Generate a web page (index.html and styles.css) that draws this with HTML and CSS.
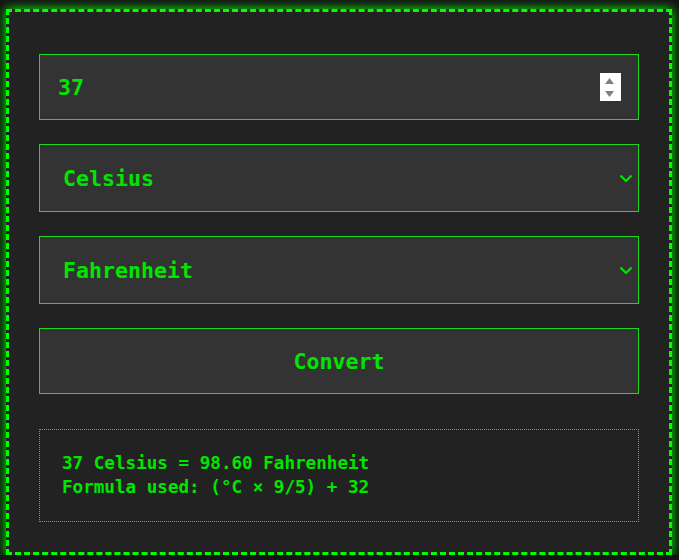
FILE: index.html
```html
<!DOCTYPE html>
<html lang="en">
<head>
<meta charset="utf-8">
<title>Temperature Converter</title>
<link rel="stylesheet" href="styles.css">
</head>
<body>
<div class="converter">
  <div class="wrap wrap-num">
    <input class="field num" type="number" value="37">
    <span class="spin">
      <svg width="21" height="28" viewBox="0 0 21 28"><path d="M5 11 L9.5 5 L14 11 Z" fill="#808080"/><path d="M5 18 L14 18 L9.5 24 Z" fill="#808080"/></svg>
    </span>
  </div>
  <div class="wrap wrap-sel">
    <select class="field sel">
      <option>Celsius</option>
      <option>Fahrenheit</option>
      <option>Kelvin</option>
    </select>
    <svg class="chev" width="14" height="9" viewBox="0 0 14 9"><path d="M1.5 1.5 L7 7 L12.5 1.5" fill="none" stroke="#00e600" stroke-width="2.2"/></svg>
  </div>
  <div class="wrap wrap-sel">
    <select class="field sel">
      <option>Fahrenheit</option>
      <option>Celsius</option>
      <option>Kelvin</option>
    </select>
    <svg class="chev" width="14" height="9" viewBox="0 0 14 9"><path d="M1.5 1.5 L7 7 L12.5 1.5" fill="none" stroke="#00e600" stroke-width="2.2"/></svg>
  </div>
  <button class="field btn">Convert</button>
  <div class="result">
    <div>37 Celsius = 98.60 Fahrenheit</div>
    <div>Formula used: (°C × 9/5) + 32</div>
  </div>
</div>
</body>
</html>
```

FILE: styles.css
```css
html, body {
  margin: 0;
  padding: 0;
  background: #141414;
}
body {
  font-family: "DejaVu Sans Mono", "Liberation Mono", monospace;
  font-size: 18px;
  font-weight: bold;
  color: #00e600;
  padding: 9px 0 0 6px;
}
.converter {
  box-sizing: border-box;
  width: 666px;
  background: #222;
  border: 3px dashed #00ff00;
  box-shadow: 0 0 10px #00ff00;
  padding: 42px 30px 30px;
  display: flex;
  flex-direction: column;
}
.wrap {
  position: relative;
  width: 600px;
  margin-bottom: 24px;
}
.field {
  box-sizing: border-box;
  display: block;
  width: 600px;
  margin: 0;
  background: #333;
  color: #00e600;
  border: 1px solid #1fd81f;
  border-radius: 0;
  font-family: "DejaVu Sans Mono", "Liberation Mono", monospace;
  font-size: 21.6px;
  font-weight: bold;
  outline: none;
}
.num {
  height: 66px;
  padding: 0 50px 0 18px;
  -webkit-appearance: textfield;
  appearance: textfield;
}
.num::-webkit-inner-spin-button,
.num::-webkit-outer-spin-button {
  -webkit-appearance: none;
  margin: 0;
}
.spin {
  position: absolute;
  right: 18px;
  top: 19px;
  width: 21px;
  height: 28px;
  background: #fff;
  display: block;
}
.spin svg {
  display: block;
}
.sel {
  height: 68px;
  padding: 0 40px 0 23px;
  -webkit-appearance: none;
  appearance: none;
}
.chev {
  position: absolute;
  right: 6px;
  top: 30px;
  pointer-events: none;
}
.btn {
  height: 66px;
  margin-bottom: 35px;
  padding: 0;
  text-align: center;
}
.result {
  border: 1px dotted #1fd81f;
  padding: 21px 22px 22px;
  line-height: 24px;
  font-size: 17.6px;
}
```
